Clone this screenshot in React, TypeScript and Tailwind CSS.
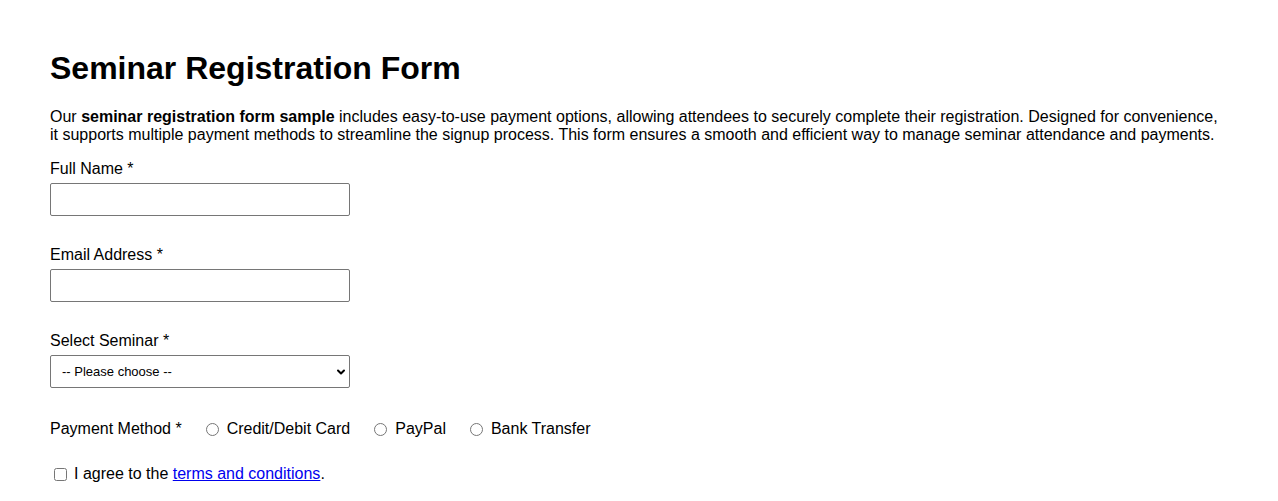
import { ChevronDown } from 'lucide-react'

const fields = [
  { label: 'Full Name *', type: 'text' },
  { label: 'Email Address *', type: 'email' },
]

const payments = ['Credit/Debit Card', 'PayPal', 'Bank Transfer']

export default function App() {
  return (
    <div className="min-h-screen bg-white text-black px-[50px] pt-[29px] font-['Liberation_Sans',Arial,sans-serif] text-[16px] leading-[18px]">
      <h1 className="text-[32px] leading-[37px] font-bold mt-[21px] mb-[21px]">Seminar Registration Form</h1>

      <p className="mb-[16px]">
        Our <strong className="font-bold">seminar registration form sample</strong> includes easy-to-use payment options, allowing attendees to securely complete their registration. Designed for convenience, it supports multiple payment methods to streamline the signup process. This form ensures a smooth and efficient way to manage seminar attendance and payments.
      </p>

      {fields.map(({ label, type }) => (
        <div key={label} className="mb-[30px]">
          <label className="block mb-[5px]">{label}</label>
          <input
            type={type}
            className="block w-[300px] h-[33px] px-2 border border-[#767676] rounded-[2px] bg-white outline-none"
          />
        </div>
      ))}

      {/* Seminar select */}
      <div className="mb-[32px]">
        <label className="block mb-[5px]">Select Seminar *</label>
        <div className="relative w-[300px] h-[33px]">
          <select className="appearance-none w-full h-full pl-[11px] pr-6 border border-[#767676] rounded-[2px] bg-white text-[13px] outline-none">
            <option>-- Please choose --</option>
          </select>
          <ChevronDown className="absolute right-[3px] top-[11px] w-[12px] h-[12px] pointer-events-none" strokeWidth={4} />
        </div>
      </div>

      {/* Payment */}
      <div className="flex items-center h-[18px] mb-[27px]">
        <span className="mr-[19px]">Payment Method *</span>
        {payments.map((p) => (
          <label key={p} className="flex items-center mr-[19px]">
            <input type="radio" name="payment" className="w-[13px] h-[13px] ml-[5px] mr-[8px] mt-[1px]" />
            <span>{p}</span>
          </label>
        ))}
      </div>

      {/* Terms */}
      <label className="flex items-center h-[18px]">
        <input type="checkbox" className="w-[13px] h-[13px] ml-[4px] mr-[7px] mt-[1px]" />
        <span>
          I agree to the <a href="#" className="text-[#0000ee] underline">terms and conditions</a>.
        </span>
      </label>
    </div>
  )
}
